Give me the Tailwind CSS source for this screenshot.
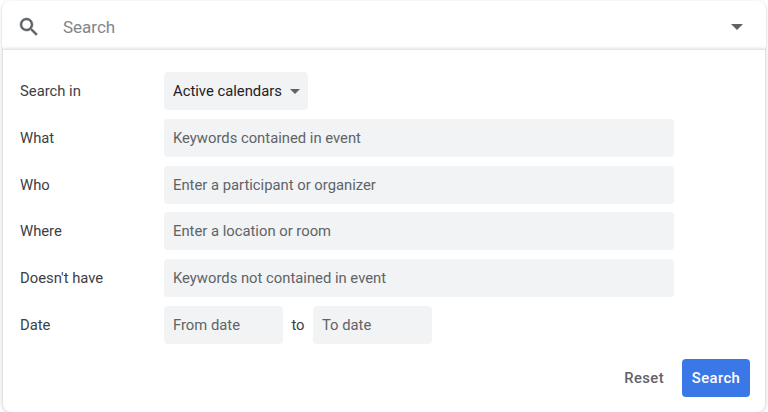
<!DOCTYPE html>
<html lang="en">
<head>
    <meta charset="UTF-8">
    <title>Calendar search</title>
    <script src="https://cdn.jsdelivr.net/npm/@tailwindcss/browser@4"></script>
</head>
<body class="bg-white font-['Roboto',sans-serif] w-[768px] h-[412px] overflow-hidden">
    <!-- Search bar -->
    <div class="mx-[2px] mt-[1px] h-[52px] flex items-center pl-[15px] pr-[23px] bg-white rounded-lg shadow-[0_1px_3px_rgba(60,64,67,0.3)]">
        <svg class="w-[24px] h-[24px] text-[#5f6368]" viewBox="0 0 24 24" fill="currentColor" stroke="currentColor" stroke-width="0.5"><path d="M15.5 14h-.79l-.28-.27A6.47 6.47 0 0 0 16 9.5 6.5 6.5 0 1 0 9.5 16c1.61 0 3.09-.59 4.23-1.57l.27.28v.79l5 4.99L20.49 19l-4.99-5zm-6 0C7.01 14 5 11.99 5 9.5S7.01 5 9.5 5 14 7.01 14 9.5 11.99 14 9.5 14z"/></svg>
        <span class="ml-[22px] mt-[2px] text-[17px] text-[#80868b] flex-1">Search</span>
        <div class="w-0 h-0 border-x-[6px] border-x-transparent border-t-[6px] border-t-[#5f6368]"></div>
    </div>
    <!-- Advanced search panel -->
    <div class="relative -mt-[3px] ml-[3px] mr-[3px] h-[362px] bg-white rounded-b-lg shadow-[0_0_4px_rgba(60,64,67,0.35)] pl-[17px] pr-[15px] pt-[22px] text-[14.8px] text-[#3c4043]">
        <div class="flex flex-col gap-[8.8px]">
            <div class="flex items-center">
                <span class="w-[144px]">Search in</span>
                <div class="h-[38px] w-[144px] bg-[#f1f3f4] rounded flex items-center pl-[9px] text-[#202124]">
                    Active calendars
                    <div class="ml-[8px] w-0 h-0 border-x-[5px] border-x-transparent border-t-[5px] border-t-[#5f6368]"></div>
                </div>
            </div>
            <div class="flex items-center">
                <span class="w-[144px]">What</span>
                <div class="h-[38px] w-[510px] bg-[#f1f3f4] rounded flex items-center pl-[9px] text-[#5f6368]">Keywords contained in event</div>
            </div>
            <div class="flex items-center">
                <span class="w-[144px]">Who</span>
                <div class="h-[38px] w-[510px] bg-[#f1f3f4] rounded flex items-center pl-[9px] text-[#5f6368]">Enter a participant or organizer</div>
            </div>
            <div class="flex items-center">
                <span class="w-[144px]">Where</span>
                <div class="h-[38px] w-[510px] bg-[#f1f3f4] rounded flex items-center pl-[9px] text-[#5f6368]">Enter a location or room</div>
            </div>
            <div class="flex items-center">
                <span class="w-[144px]">Doesn't have</span>
                <div class="h-[38px] w-[510px] bg-[#f1f3f4] rounded flex items-center pl-[9px] text-[#5f6368]">Keywords not contained in event</div>
            </div>
            <div class="flex items-center">
                <span class="w-[144px]">Date</span>
                <div class="h-[38px] w-[119px] bg-[#f1f3f4] rounded flex items-center pl-[9px] text-[#5f6368]">From date</div>
                <span class="w-[30px] text-center">to</span>
                <div class="h-[38px] w-[119px] bg-[#f1f3f4] rounded flex items-center pl-[9px] text-[#5f6368]">To date</div>
            </div>
        </div>
        <div class="flex justify-end items-center mt-[15px]">
            <span class="font-medium tracking-[0.4px] text-[#5f6368] mr-[18px]">Reset</span>
            <div class="h-[38px] w-[68px] rounded bg-[#3b78e7] text-white font-medium tracking-[0.4px] flex items-center justify-center">Search</div>
        </div>
    </div>
</body>
</html>
